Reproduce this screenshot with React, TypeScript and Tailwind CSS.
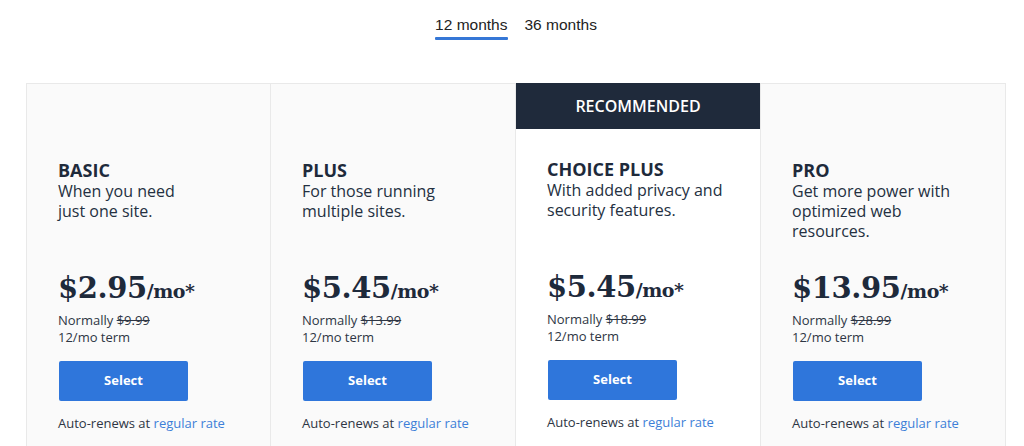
import React from "react";

type Plan = {
  name: string;
  desc: string[];
  price: string;
  normal: string;
  recommended?: boolean;
};

const plans: Plan[] = [
  { name: "BASIC", desc: ["When you need", "just one site."], price: "$2.95", normal: "$9.99" },
  { name: "PLUS", desc: ["For those running", "multiple sites."], price: "$5.45", normal: "$13.99" },
  {
    name: "CHOICE PLUS",
    desc: ["With added privacy and", "security features."],
    price: "$5.45",
    normal: "$18.99",
    recommended: true,
  },
  { name: "PRO", desc: ["Get more power with", "optimized web", "resources."], price: "$13.95", normal: "$28.99" },
];

function Card({ plan, first }: { plan: Plan; first: boolean }) {
  return (
    <div
      className={
        plan.recommended
          ? "bg-white border-r border-[#e9e9e9] flex flex-col"
          : `bg-[#fafafa] border-t border-r border-[#e9e9e9] flex flex-col ${first ? "border-l" : ""}`
      }
    >
      {plan.recommended ? (
        <div className="h-[46px] bg-[#1f2a3b] flex items-center justify-center text-white text-[16px] font-semibold">
          RECOMMENDED
        </div>
      ) : (
        <div className="h-[45px]" />
      )}
      <div className={`pl-[31px] pr-4 ${plan.recommended ? "pt-[30px]" : "pt-[31px]"}`}>
        <div className="text-[18px] leading-[20px] font-bold text-[#1e2a3b]">{plan.name}</div>
        <div className="mt-[1px] min-h-[60px] text-[16px] leading-[20px] text-[#243041]">
          {plan.desc.map((l) => (
            <div key={l}>{l}</div>
          ))}
        </div>
        <div
          className="mt-[27px] h-[40px] flex items-end text-[#1e2a3b] font-bold"
          style={{ fontFamily: '"DejaVu Serif", "Liberation Serif", serif' }}
        >
          <span className="text-[29px] leading-[40px] tracking-[-0.4px]">{plan.price}</span>
          <span className="text-[19px] leading-[34px] tracking-[-0.5px]">/mo*</span>
        </div>
        <div className="mt-[4px] text-[13px] leading-[17px] text-[#2e3644]">
          Normally <span className="line-through">{plan.normal}</span>
        </div>
        <div className="text-[13px] leading-[17px] text-[#2e3644]">12/mo term</div>
        <button className="mt-[15px] ml-px w-[129px] h-[40px] rounded-[2px] bg-[#2f76db] text-white text-[13px] font-bold">
          Select
        </button>
        <div className="mt-[14px] text-[13px] leading-[17px] text-[#2e3644] pb-6">
          Auto-renews at <span className="text-[#3d7fd8]">regular rate</span>
        </div>
      </div>
    </div>
  );
}

export default function App() {
  return (
    <div
      className="w-[1024px] h-[446px] overflow-hidden bg-white"
      style={{ fontFamily: '"Open Sans", "Liberation Sans", sans-serif' }}
    >
      <div className="ml-[26px] w-[980px]">
        <div className="pt-[15px] flex justify-center gap-[17px]">
          <div className="flex flex-col items-center">
            <span
              className="text-[15.5px] leading-[20px] text-[#222]"
              style={{ fontFamily: '"Liberation Sans", Arial, sans-serif' }}
            >
              12 months
            </span>
            <div className="mt-[2px] h-[3px] w-full bg-[#3577d6] rounded-[1px]" />
          </div>
          <div className="flex flex-col items-center">
            <span
              className="text-[15.5px] leading-[20px] text-[#222]"
              style={{ fontFamily: '"Liberation Sans", Arial, sans-serif' }}
            >
              36 months
            </span>
          </div>
        </div>
        <div className="mt-[43px] grid grid-cols-4">
          {plans.map((p, i) => (
            <Card key={p.name} plan={p} first={i === 0} />
          ))}
        </div>
      </div>
    </div>
  );
}
